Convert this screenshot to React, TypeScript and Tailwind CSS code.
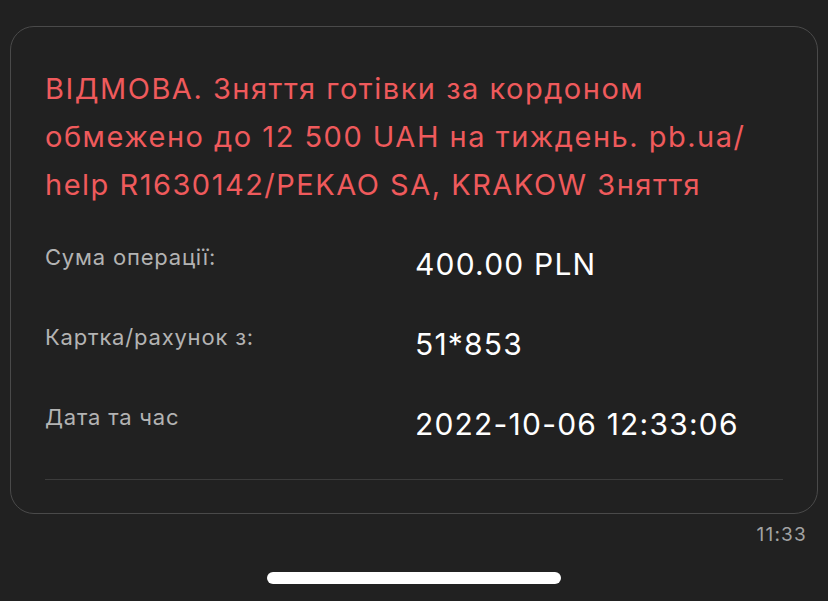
export default function App() {
  const rows = [
    { label: "Сума операції:", value: "400.00 PLN" },
    { label: "Картка/рахунок з:", value: "51*853" },
    { label: "Дата та час", value: "2022-10-06 12:33:06" },
  ]

  return (
    <div className="w-[828px] h-[601px] bg-[#212121] overflow-hidden pt-[26px] font-['Inter','Noto_Sans',sans-serif]">
      <div className="mx-[10px] rounded-[24px] border border-[#4a4a4a] px-[34px] pt-[38px] pb-[33px]">
        <p className="text-[29px] leading-[48px] text-[#ef5a5c] tracking-[1.5px] whitespace-nowrap">
          ВІДМОВА. Зняття готівки за кордоном
          <br />
          обмежено до 12 500 UAH на тиждень. pb.ua/
          <br />
          help R1630142/PEKAO SA, KRAKOW Зняття
        </p>

        <div className="mt-[36px] flex flex-col gap-[44px]">
          {rows.map((row) => (
            <div key={row.label} className="flex items-start">
              <div className="w-[370px] text-[22px] leading-[24px] tracking-[0.8px] text-[#b3b3b3]">{row.label}</div>
              <div className="mt-[2px] text-[30px] leading-[34px] tracking-[1.2px] text-white">{row.value}</div>
            </div>
          ))}
        </div>

        <div className="mt-[38px] h-px bg-[#3c3c3c]" />
      </div>

      <div className="mt-[10px] pr-[21px] text-right text-[19px] leading-[22px] tracking-[1.2px] text-[#a3a3a3]">11:33</div>

      <div className="mt-[26px] flex justify-center">
        <div className="h-[12px] w-[294px] rounded-full bg-white" />
      </div>
    </div>
  )
}
